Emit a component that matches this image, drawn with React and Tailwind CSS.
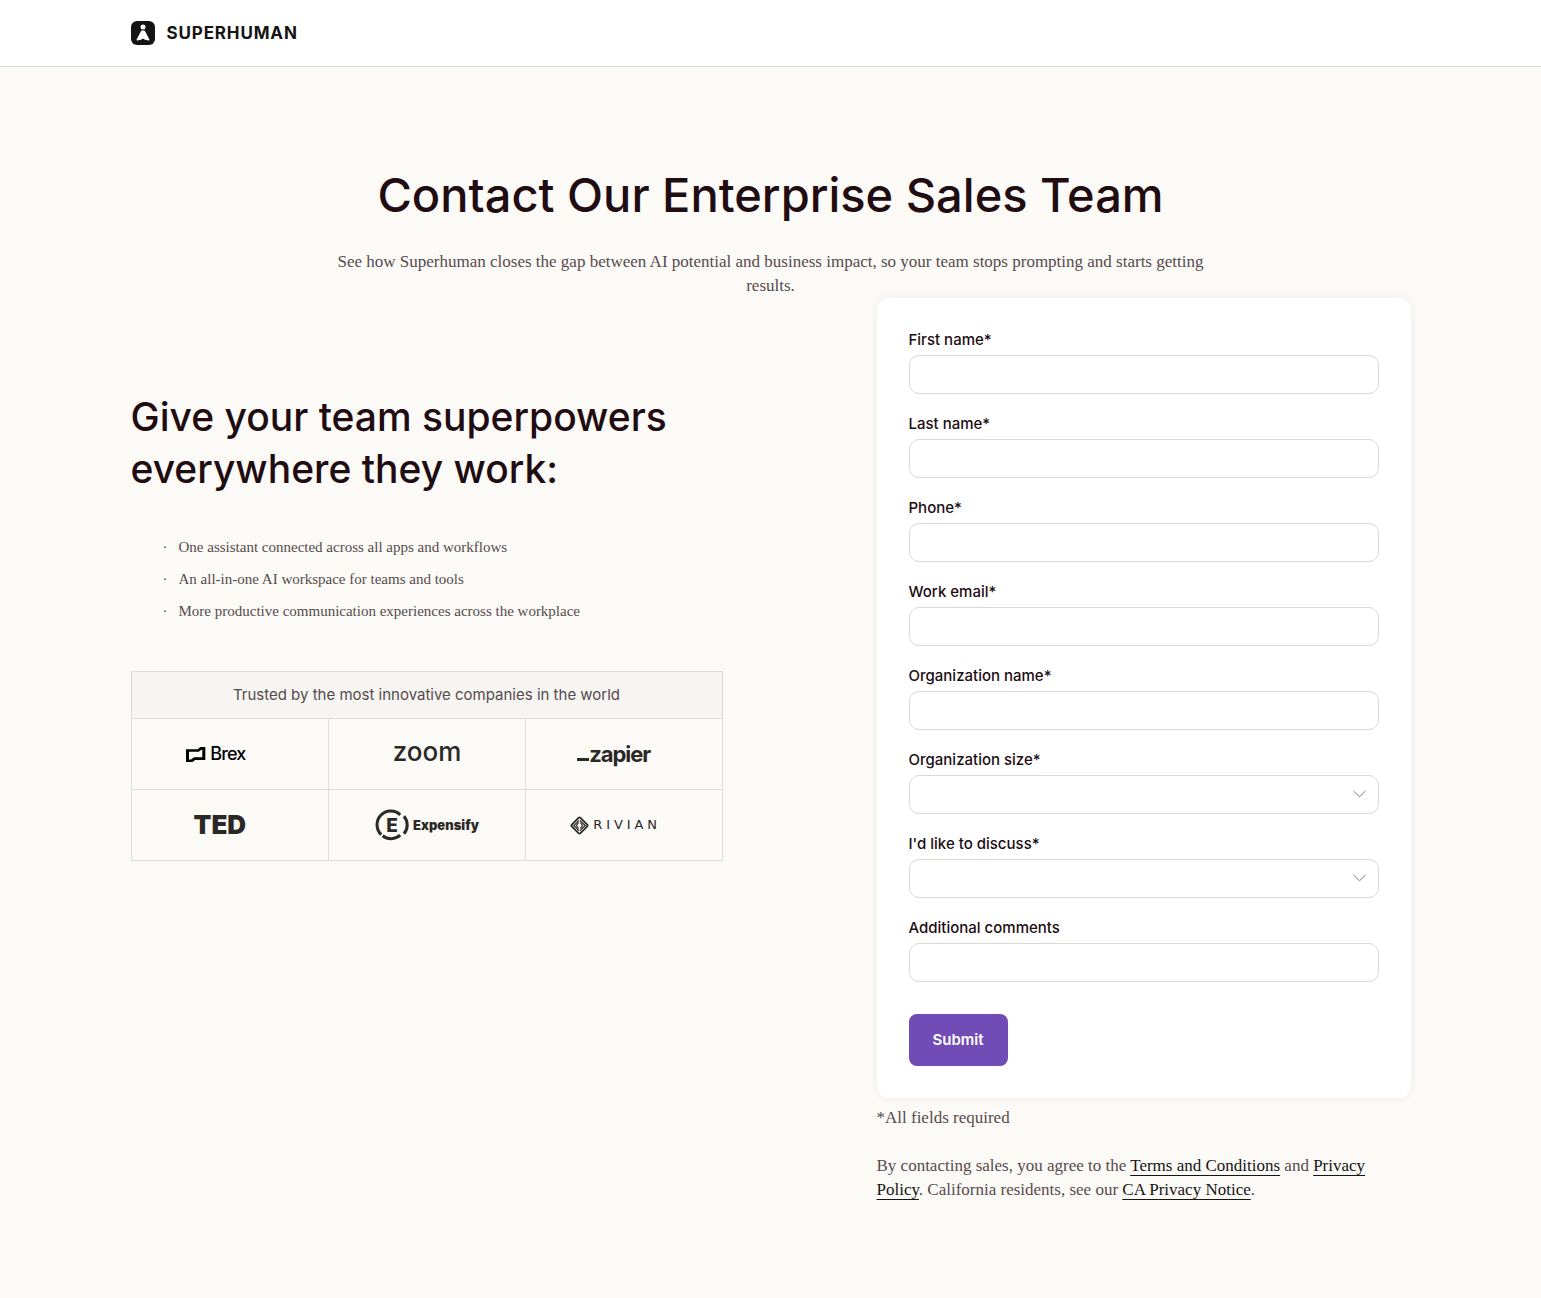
import React from "react";

const fields = [
  { id: "firstName", label: "First name*", type: "text" },
  { id: "lastName", label: "Last name*", type: "text" },
  { id: "phone", label: "Phone*", type: "tel" },
  { id: "email", label: "Work email*", type: "email" },
  { id: "orgName", label: "Organization name*", type: "text" },
  { id: "orgSize", label: "Organization size*", type: "select" },
  { id: "discuss", label: "I'd like to discuss*", type: "select" },
  { id: "comments", label: "Additional comments", type: "text" },
];

const benefits = [
  "One assistant connected across all apps and workflows",
  "An all-in-one AI workspace for teams and tools",
  "More productive communication experiences across the workplace",
];

function Header() {
  return (
    <header className="bg-white border-b border-[#dcd9d5] px-8">
      <div className="max-w-[1280px] mx-auto h-[66px] flex items-center">
        <a href="#" className="flex items-center gap-3 text-[#141413]">
          <svg width="24" height="24" viewBox="0 0 24 24">
            <rect width="24" height="24" rx="6" fill="currentColor" />
            <circle cx="12" cy="6" r="2.500" fill="#fff" />
            <path
              d="M10.300 9.400h3.400L18.400 18.600c.2.500-.1 1.100-.7.900l-3.700-.7-2-1.300-2 1.300-3.700.7c-.6.200-.9-.4-.7-.9z"
              fill="#fff"
            />
          </svg>
          <span className="text-[17px] leading-6 font-bold tracking-wider">
            SUPERHUMAN
          </span>
        </a>
      </div>
    </header>
  );
}

function Brex() {
  return (
    <div className="flex items-center gap-1 text-black">
      <svg width="20" height="15" viewBox="0 0 20 15">
        <path
          d="M0 2.200h11.500L14.500 0h4.800v13H9.200l-2.700 2H0zM3 4.800v7.700h2l3-2.200h8.300V2.700h-.8l-2.800 2.100z"
          fill="currentColor"
          fillRule="evenodd"
        />
      </svg>
      <span className="text-lg leading-5 font-medium tracking-tighter">Brex</span>
    </div>
  );
}

function Zapier() {
  return (
    <div className="flex items-center">
      <svg width="12" height="16" viewBox="0 0 12 16">
        <rect y="12" width="12" height="3" fill="currentColor" />
      </svg>
      <span className="text-[22px] leading-6 font-bold tracking-tighter">zapier</span>
    </div>
  );
}

function Expensify() {
  return (
    <div className="flex items-center gap-1">
      <svg width="34" height="32" viewBox="0 0 34 32" fill="none">
        <g stroke="currentColor" strokeWidth="3">
          <path d="M6.300 25.700A13.700 13.700 0 0 1 25.200 5.800" />
          <path d="M29 7.200A13.700 13.700 0 0 1 29 24.800" />
          <path d="M25.200 26.200A13.700 13.700 0 0 1 7.600 26.800" />
        </g>
        <text x="17" y="22.700" textAnchor="middle" fontSize="19" fontWeight="800" fill="currentColor">
          E
        </text>
      </svg>
      <span className="text-[13px] leading-5 font-black">Expensify</span>
    </div>
  );
}

function Rivian() {
  return (
    <div className="flex items-center gap-1">
      <svg width="19" height="19" viewBox="0 0 19 19" fill="none" stroke="currentColor">
        <path d="M8.500 1.800Q9.500.9 10.500 1.800L17.200 8.500Q18.100 9.500 17.200 10.500L10.500 17.200Q9.500 18.100 8.500 17.200L1.800 10.500Q.9 9.500 1.800 8.500z" strokeWidth="1.800" />
        <path d="M9 4.300 3.800 9.500 9 14.700M10 4.300 15.200 9.500 10 14.700" strokeWidth="1.200" />
        <path d="M8.700 6.500 6.400 9.500 8.700 12.500M10.300 6.500 12.600 9.500 10.300 12.500" strokeWidth="1.200" />
      </svg>
      <span className="text-[13px] leading-5 tracking-[0.3em] font-['DejaVu_Sans',sans-serif]">
        RIVIAN
      </span>
    </div>
  );
}

function Logos() {
  const top = "h-[71px] flex items-center justify-center border-b border-[#e0dedb]";
  const bottom = "h-[70px] flex items-center justify-center border-[#e0dedb]";
  return (
    <section className="mt-12 border border-[#dedcd8] text-[#2a2926]">
      <p className="h-[47px] flex items-center justify-center bg-[#f6f5f2] border-b border-[#dedcd8] text-[15px] leading-6 text-[#574a4d]">
        Trusted by the most innovative companies in the world
      </p>
      <div className="grid grid-cols-3">
        <div className={top + " pr-7"}>
          <Brex />
        </div>
        <div className={top + " border-l pb-1"}>
          <span className="text-[26px] leading-6 font-medium">zoom</span>
        </div>
        <div className={top + " border-l pr-5"}>
          <Zapier />
        </div>
        <div className={bottom + " pr-5"}>
          <span className="text-[26px] leading-6 font-black">TED</span>
        </div>
        <div className={bottom + " border-l"}>
          <Expensify />
        </div>
        <div className={bottom + " border-l pr-4"}>
          <Rivian />
        </div>
      </div>
    </section>
  );
}

function Field({ id, label, type }) {
  const box = "block w-full h-[39px] px-3 bg-white border border-[#dcd9d3] rounded-[10px] text-base";
  return (
    <div className="mb-5">
      <label htmlFor={id} className="block mb-[5px] text-[15px] leading-5 font-medium">
        {label}
      </label>
      {type === "select" ? (
        <div className="relative">
          <select id={id} name={id} defaultValue="" className={box + " appearance-none"}>
            <option value=""></option>
          </select>
          <svg
            className="absolute right-[13px] top-[15px] pointer-events-none"
            width="13"
            height="8"
            viewBox="0 0 13 8"
            fill="none"
            stroke="#7c7a78"
          >
            <path d="M.5 1l6 5.800 6-5.800" />
          </svg>
        </div>
      ) : (
        <input id={id} name={id} type={type} className={box} />
      )}
    </div>
  );
}

function ContactForm() {
  return (
    <form
      onSubmit={(e) => e.preventDefault()}
      className="bg-white rounded-xl p-8 shadow-[0_0_10px_rgba(60,50,30,0.08)]"
    >
      {fields.map((field) => (
        <Field key={field.id} {...field} />
      ))}
      <button
        type="submit"
        className="mt-3 h-[52px] px-6 rounded-lg bg-[#714cb6] text-white text-[15px] leading-5 font-semibold cursor-pointer"
      >
        Submit
      </button>
    </form>
  );
}

export default function App() {
  const link = "text-[#141413] underline underline-offset-4 decoration-1";

  return (
    <div className="min-h-screen bg-[#fcfaf7] text-[#210c12] font-[Inter,sans-serif]">
      <Header />
      <main className="px-8 py-24">
        <div className="max-w-[1280px] mx-auto">
          <div className="max-w-[900px] mx-auto text-center">
            <h1 className="text-[47px] leading-[63px] font-medium">
              Contact Our Enterprise Sales Team
            </h1>
            <p className="mt-6 text-[17px] leading-6 text-[#574a4d] font-['Liberation_Serif',serif]">
              See how Superhuman closes the gap between AI potential and business
              impact, so your team stops prompting and starts getting results.
            </p>
          </div>

          <div className="grid grid-cols-[746fr_534fr]">
            <div className="pt-[93px]">
              <div className="max-w-[592px]">
                <h2 className="text-[39px] leading-[52px] font-medium">
                  Give your team superpowers everywhere they work:
                </h2>
                <ul className="mt-10 pl-8 flex flex-col gap-2 text-[15px] leading-6 text-[#574a4d] font-['Liberation_Serif',serif]">
                  {benefits.map((text) => (
                    <li key={text} className="flex">
                      <span className="w-4">·</span>
                      {text}
                    </li>
                  ))}
                </ul>
                <Logos />
              </div>
            </div>

            <div>
              <ContactForm />
              <div className="mt-2 text-[17px] leading-6 text-[#574a4d] font-['Liberation_Serif',serif]">
                <p>*All fields required</p>
                <p className="mt-6">
                  By contacting sales, you agree to the{" "}
                  <a href="#" className={link}>Terms and Conditions</a> and{" "}
                  <a href="#" className={link}>Privacy Policy</a>. California
                  residents, see our{" "}
                  <a href="#" className={link}>CA Privacy Notice</a>.
                </p>
              </div>
            </div>
          </div>
        </div>
      </main>
    </div>
  );
}
